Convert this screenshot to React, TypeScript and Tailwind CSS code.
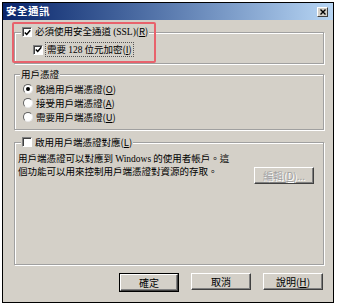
const face = { fontFamily: '"Noto Sans CJK TC", "Liberation Sans", sans-serif' };

function Check({ checked }: { checked?: boolean }) {
  return (
    <span className="w-[10px] h-[10px] shrink-0 bg-white border border-t-[#808080] border-l-[#808080] border-b-white border-r-white shadow-[inset_1px_1px_0_#404040] flex items-center justify-center">
      {checked && (
        <svg width="7" height="7" viewBox="0 0 7 7">
          <path d="M0.8 3.4 L2.7 5.4 L6.3 1.2" fill="none" stroke="#000" strokeWidth="1.5" />
        </svg>
      )}
    </span>
  );
}

function Radio({ on }: { on?: boolean }) {
  return (
    <span className="w-[10px] h-[10px] shrink-0 rounded-full bg-white border border-t-[#606060] border-l-[#606060] border-b-[#e8e8e8] border-r-[#e8e8e8] flex items-center justify-center">
      {on && <span className="w-[4px] h-[4px] rounded-full bg-black" />}
    </span>
  );
}

function Key({ k }: { k: string }) {
  return (
    <span>
      (<span className="underline underline-offset-1">{k}</span>)
    </span>
  );
}

function WinButton({ label, primary, disabled }: { label: React.ReactNode; primary?: boolean; disabled?: boolean }) {
  return (
    <div className={primary ? "border border-black" : ""}>
      <div
        className={
          "h-[17px] flex items-center justify-center bg-[#d4d0c8] border border-t-white border-l-white border-b-[#404040] border-r-[#404040] shadow-[inset_-1px_-1px_0_#808080] text-[10px] " +
          (disabled ? "text-[#a0a0a0] [text-shadow:1px_1px_0_#fff]" : "text-black") +
          (primary ? " w-[58px]" : " w-[60px]")
        }
      >
        {label}
      </div>
    </div>
  );
}

export default function App() {
  return (
    <div className="w-[337px] h-[305px] bg-white pt-[2px] pl-[2px] relative" style={face}>
      <div className="w-[332px] h-[301px] border border-black bg-[#d4d0c8] flex flex-col">
        <div className="h-[17px] shrink-0 bg-gradient-to-r from-[#0a246a] to-[#b8d6f4] flex items-center justify-between pl-[3px] pr-[5px]">
          <span className="text-white font-bold text-[10.5px] leading-none tracking-[0.5px]">安全通訊</span>
          <div className="w-[11px] h-[10px] bg-[#d4d0c8] border border-t-white border-l-white border-b-[#404040] border-r-[#404040] flex items-center justify-center">
            <svg width="6" height="6" viewBox="0 0 6 6">
              <path d="M0.5 0.5 L5.5 5.5 M5.5 0.5 L0.5 5.5" stroke="#000" strokeWidth="1.4" />
            </svg>
          </div>
        </div>

        <div className="flex-1 flex flex-col pl-[11px] pr-[9px] text-[9.5px] text-black">
          {/* SSL */}
          <div className="mt-[12px] border border-[#a0a0a0] shadow-[inset_1px_1px_0_#fff,1px_1px_0_#fff] pb-[7px]">
            <div className="-mt-[8px] ml-[6px] w-fit px-[1px] h-[14px] bg-[#d4d0c8] flex items-center gap-[3px]">
              <Check checked />
              <span>
                必須使用安全通道 <span style={{ fontFamily: '"Liberation Serif", serif' }}>(SSL)</span>
                <Key k="R" />
              </span>
            </div>
            <div className="mt-[4px] ml-[18px] h-[13px] flex items-center gap-[3px]">
              <Check checked />
              <span className="outline-1 outline-dotted outline-[#555] px-[1px] leading-[12px]">
                需要 <span style={{ fontFamily: '"Liberation Serif", serif' }}>128</span> 位元加密
                <Key k="I" />
              </span>
            </div>
          </div>

          {/* client cert */}
          <div className="mt-[10px] border border-[#a0a0a0] shadow-[inset_1px_1px_0_#fff,1px_1px_0_#fff] pb-[5px]">
            <div className="-mt-[8px] ml-[5px] w-fit px-[1px] h-[14px] bg-[#d4d0c8] flex items-center">用戶憑證</div>
            <div className="mt-[1px] ml-[8px] flex flex-col">
              <div className="h-[14px] flex items-center gap-[3px]">
                <Radio on />
                <span>略過用戶端憑證<Key k="O" /></span>
              </div>
              <div className="h-[14px] flex items-center gap-[3px]">
                <Radio />
                <span>接受用戶端憑證<Key k="A" /></span>
              </div>
              <div className="h-[14px] flex items-center gap-[3px]">
                <Radio />
                <span>需要用戶端憑證<Key k="U" /></span>
              </div>
            </div>
          </div>

          {/* mapping */}
          <div className="mt-[12px] flex-1 border border-[#a0a0a0] shadow-[inset_1px_1px_0_#fff,1px_1px_0_#fff]">
            <div className="-mt-[8px] ml-[6px] w-fit px-[1px] h-[14px] bg-[#d4d0c8] flex items-center gap-[3px]">
              <Check />
              <span>啟用用戶端憑證對應<Key k="L" /></span>
            </div>
            <div className="mt-[3px] pl-[3px] pr-[9px] flex items-start justify-between">
              <div className="leading-[12px] whitespace-nowrap">
                <div>
                  用戶端憑證可以對應到 <span style={{ fontFamily: '"Liberation Serif", serif' }}>Windows</span> 的使用者帳戶。這
                </div>
                <div>個功能可以用來控制用戶端憑證對資源的存取。</div>
              </div>
              <div className="mt-[15px]">
                <WinButton disabled label={<span>編輯<Key k="D" />...</span>} />
              </div>
            </div>
          </div>

          <div className="mt-[8px] mb-[10px] pr-[1px] flex justify-end gap-[12px]">
            <WinButton primary label="確定" />
            <WinButton label="取消" />
            <WinButton label={<span>說明<Key k="H" /></span>} />
          </div>
        </div>
      </div>

      <div className="absolute left-[12px] top-[22px] w-[144px] h-[41px] border-2 border-[#e8626c] rounded-[2px] pointer-events-none" />
    </div>
  );
}
